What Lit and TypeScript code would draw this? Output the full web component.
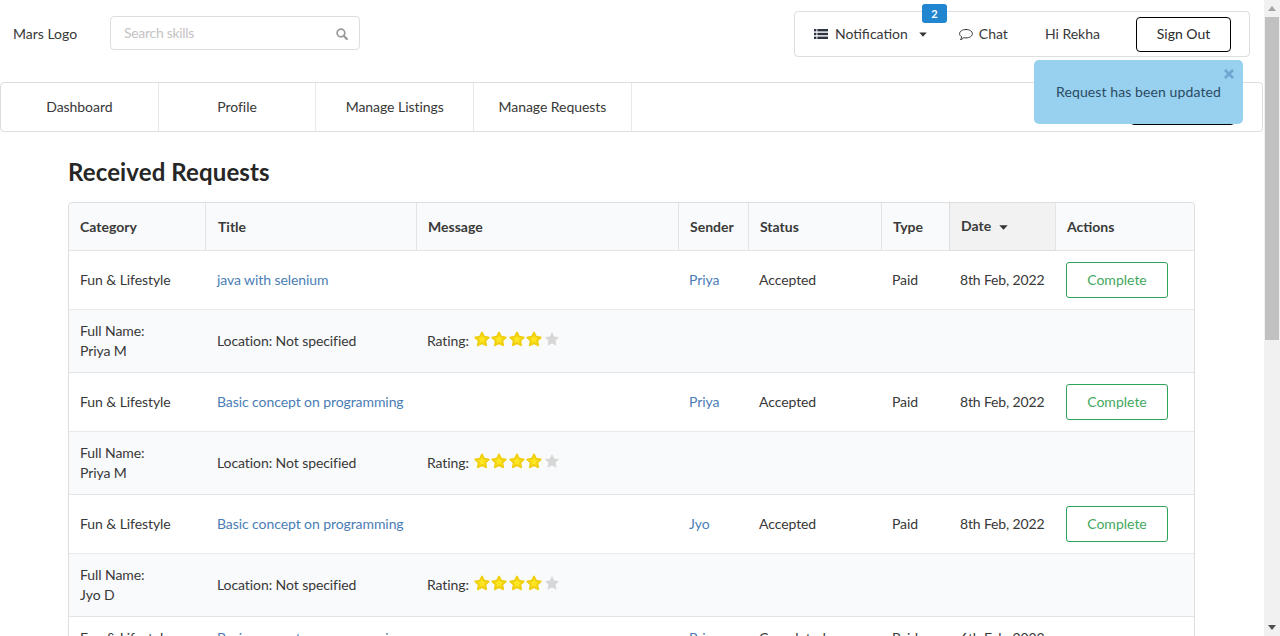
import { LitElement, html, css, nothing } from 'lit';
import { customElement } from 'lit/decorators.js';

const starPath = 'M8 1.6 L10 5.8 L14.6 6.4 L11.2 9.6 L12.1 14.2 L8 12 L3.9 14.2 L4.8 9.6 L1.4 6.4 L6 5.8 Z';

interface Request {
  title: string;
  sender: string;
  status: string;
  date: string;
  fullName: string;
  canComplete: boolean;
}

const requests: Request[] = [
  { title: 'java with selenium', sender: 'Priya', status: 'Accepted', date: '8th Feb, 2022', fullName: 'Priya M', canComplete: true },
  { title: 'Basic concept on programming', sender: 'Priya', status: 'Accepted', date: '8th Feb, 2022', fullName: 'Priya M', canComplete: true },
  { title: 'Basic concept on programming', sender: 'Jyo', status: 'Accepted', date: '8th Feb, 2022', fullName: 'Jyo D', canComplete: true },
  { title: 'Basic concept on programming', sender: 'Priya', status: 'Completed', date: '6th Feb, 2022', fullName: 'Priya M', canComplete: false },
];

const columns = [136, 211, 262, 70, 133, 68, 106, 139];

@customElement('app-root')
export class AppRoot extends LitElement {
  static styles = css`
    :host {
      display: flex;
      height: 636px;
      overflow: hidden;
      background: #fff;
      font-family: 'Lato', 'Liberation Sans', sans-serif;
      font-size: 14px;
      line-height: 20px;
      color: #383838;
    }
    .page {
      position: relative;
      width: 1264px;
      flex: none;
    }
    .top {
      display: flex;
      align-items: flex-start;
      padding: 11px 14px 25px 13px;
    }
    .logo {
      margin-top: 13px;
      width: 97px;
    }
    .search {
      display: flex;
      align-items: center;
      width: 250px;
      height: 34px;
      box-sizing: border-box;
      margin-top: 5px;
      border: 1px solid rgba(34, 36, 38, 0.15);
      border-radius: 4px;
      padding: 0 11px 0 13px;
    }
    .search input {
      flex: 1;
      min-width: 0;
      border: none;
      outline: none;
      padding: 0;
      font: inherit;
      background: transparent;
    }
    .search input::placeholder {
      color: #c4c4c4;
      letter-spacing: -0.3px;
    }
    .search svg {
      margin-top: 2px;
    }
    .user-menu {
      position: relative;
      display: flex;
      align-items: center;
      height: 46px;
      box-sizing: border-box;
      margin-left: auto;
      border: 1px solid rgba(34, 36, 38, 0.15);
      border-radius: 4px;
      padding: 0 18px 0 19px;
    }
    .user-menu svg {
      flex: none;
    }
    .notification {
      margin-left: 7px;
    }
    .caret {
      margin-left: 11px;
    }
    .chat-icon {
      margin-left: 32px;
    }
    .chat {
      margin-left: 6px;
    }
    .hello {
      margin-left: 37px;
    }
    .sign-out {
      margin-left: 36px;
      width: 95px;
      height: 35px;
      box-sizing: border-box;
      border: 1px solid #000;
      border-radius: 4px;
      background: #fff;
      padding: 0;
      font: inherit;
      font-size: 14px;
      color: #2b2b2b;
    }
    .badge {
      position: absolute;
      left: 127px;
      top: -8px;
      width: 25px;
      height: 19px;
      border-radius: 3px;
      background: #2185d0;
      color: #fff;
      font-size: 11px;
      font-weight: 700;
      line-height: 19px;
      text-align: center;
    }
    .tabs {
      display: flex;
      align-items: stretch;
      height: 50px;
      box-sizing: border-box;
      margin-right: 1px;
      border: 1px solid rgba(34, 36, 38, 0.15);
      border-radius: 4px;
    }
    .tab {
      display: flex;
      align-items: center;
      justify-content: center;
      width: 157.7px;
      box-sizing: border-box;
      border-right: 1px solid rgba(34, 36, 38, 0.1);
      letter-spacing: -0.05px;
    }
    .tab-button {
      margin: 6px 27px 6px auto;
      width: 105px;
      border: 1px solid #000;
      border-radius: 4px;
      background: #fff;
    }
    .toast {
      position: absolute;
      left: 1034px;
      top: 60px;
      width: 209px;
      height: 64px;
      border-radius: 5px;
      background: #98d0ef;
      color: #2a4a62;
      display: flex;
      align-items: center;
      justify-content: center;
      padding-bottom: 1px;
      box-sizing: border-box;
      letter-spacing: 0.1px;
    }
    .toast svg {
      position: absolute;
      right: 9px;
      top: 9px;
    }
    .content {
      padding: 0 69px 0 68px;
    }
    h1 {
      margin: 0;
      padding: 25px 0 15px;
      font-size: 24px;
      line-height: 30px;
      font-weight: 700;
      color: #262626;
      letter-spacing: 0.12px;
    }
    table {
      width: 1127px;
      table-layout: fixed;
      border-collapse: separate;
      border-spacing: 0;
      border: 1px solid rgba(34, 36, 38, 0.15);
      border-radius: 4px;
    }
    th {
      height: 48px;
      box-sizing: border-box;
      padding: 0 0 0 11px;
      text-align: left;
      font-weight: 700;
      color: #3a3a3a;
      background: #f9fafb;
      border-left: 1px solid rgba(34, 36, 38, 0.1);
      border-bottom: 1px solid rgba(34, 36, 38, 0.1);
    }
    th:first-child {
      border-left: none;
      border-top-left-radius: 4px;
    }
    th:nth-child(2) {
      padding-left: 12px;
    }
    th:last-child {
      border-top-right-radius: 4px;
    }
    th.sorted {
      background: #f2f2f2;
      padding-bottom: 2px;
    }
    th.sorted svg {
      margin-left: 4px;
      vertical-align: 1px;
    }
    td {
      padding: 11px 0 11px 11px;
      border-bottom: 1px solid rgba(34, 36, 38, 0.1);
      letter-spacing: -0.08px;
    }
    td:nth-child(2) {
      padding-left: 12px;
    }
    td.date {
      letter-spacing: -0.15px;
    }
    .details td {
      background: #f9fafb;
    }
    a {
      color: #4a7db5;
      text-decoration: none;
    }
    .complete {
      display: block;
      width: 102px;
      height: 36px;
      box-sizing: border-box;
      border: 1px solid #2fa35a;
      border-radius: 3px;
      background: #fff;
      padding: 0;
      font: inherit;
      color: #43a860;
    }
    .rating {
      display: flex;
      align-items: center;
      white-space: nowrap;
    }
    .stars {
      display: flex;
      margin: -5px 0 0 5px;
    }
    .stars svg {
      display: block;
      margin-right: 1.5px;
    }
    .scrollbar {
      width: 16px;
      flex: none;
      background: #f1f1f1;
      position: relative;
    }
    .arrow {
      display: flex;
      align-items: center;
      justify-content: center;
      height: 17px;
    }
    .thumb {
      height: 323px;
      margin: 0 1px;
      background: #c1c1c1;
    }
    .arrow.down {
      position: absolute;
      left: 0;
      right: 0;
      bottom: 0;
    }
  `;

  private star(on: boolean) {
    return html`<svg width="16" height="16" viewBox="0 0 16 16">
      <path
        d=${starPath}
        fill=${on ? '#ffe623' : '#d6d6d6'}
        stroke=${on ? '#f0cf10' : '#d6d6d6'}
        stroke-width=${on ? 2 : 0.6}
        stroke-linejoin="round"
      ></path>
    </svg>`;
  }

  private renderRequest(r: Request) {
    return html`
      <tr>
        <td>Fun &amp; Lifestyle</td>
        <td><a href="#">${r.title}</a></td>
        <td></td>
        <td><a href="#">${r.sender}</a></td>
        <td>${r.status}</td>
        <td>Paid</td>
        <td class="date">${r.date}</td>
        <td>${r.canComplete ? html`<button class="complete">Complete</button>` : nothing}</td>
      </tr>
      <tr class="details">
        <td>Full Name:<br />${r.fullName}</td>
        <td>Location: Not specified</td>
        <td>
          <div class="rating">
            Rating:
            <span class="stars">${[1, 2, 3, 4, 5].map((n) => this.star(n <= 4))}</span>
          </div>
        </td>
        <td></td>
        <td></td>
        <td></td>
        <td></td>
        <td></td>
      </tr>
    `;
  }

  render() {
    return html`
      <div class="page">
        <div class="top">
          <div class="logo">Mars Logo</div>
          <label class="search">
            <input placeholder="Search skills" />
            <svg width="12" height="12" viewBox="0 0 14 14" fill="none" stroke="#999" stroke-width="2">
              <circle cx="5.8" cy="5.8" r="4.5"></circle>
              <path d="M9 9 L12.6 12.8" stroke-width="2.6" stroke-linecap="round"></path>
            </svg>
          </label>
          <div class="user-menu">
            <svg width="14" height="12" viewBox="0 0 14 12" fill="#2b3440">
              <rect x="0" y="1" width="2.4" height="2.4"></rect>
              <rect x="3.4" y="1" width="10.6" height="2.4"></rect>
              <rect x="0" y="4.8" width="2.4" height="2.4"></rect>
              <rect x="3.4" y="4.8" width="10.6" height="2.4"></rect>
              <rect x="0" y="8.6" width="2.4" height="2.4"></rect>
              <rect x="3.4" y="8.6" width="10.6" height="2.4"></rect>
            </svg>
            <span class="notification">Notification</span>
            <svg class="caret" width="8" height="5" viewBox="0 0 8 5" fill="#333">
              <path d="M0.3 0.4 H7.7 L4 4.8 Z"></path>
            </svg>
            <span class="badge">2</span>
            <svg class="chat-icon" width="14" height="13" viewBox="0 0 14 13" fill="none" stroke="#333" stroke-width="1">
              <path d="M7 1.5 C10.4 1.5 13.4 3.2 13.4 5.7 C13.4 8.2 10.4 9.9 7 9.9 C6.2 9.9 5.4 9.8 4.8 9.7 C4 10.5 2.8 11.4 1.4 11.6 C2.1 10.8 2.6 10 2.8 9 C1.4 8.2 0.6 7 0.6 5.7 C0.6 3.2 3.6 1.5 7 1.5 Z"></path>
            </svg>
            <span class="chat">Chat</span>
            <span class="hello">Hi Rekha</span>
            <button class="sign-out">Sign Out</button>
          </div>
        </div>

        <nav class="tabs">
          <div class="tab">Dashboard</div>
          <div class="tab">Profile</div>
          <div class="tab">Manage Listings</div>
          <div class="tab">Manage Requests</div>
          <button class="tab-button"></button>
        </nav>

        <div class="toast">
          Request has been updated
          <svg width="10" height="10" viewBox="0 0 10 10" stroke="#6ea6cf" stroke-width="2.6">
            <path d="M1 1 L9 9 M9 1 L1 9"></path>
          </svg>
        </div>

        <div class="content">
          <h1>Received Requests</h1>
          <table>
            <colgroup>
              ${columns.map((w) => html`<col style="width: ${w}px" />`)}
            </colgroup>
            <thead>
              <tr>
                <th>Category</th>
                <th>Title</th>
                <th>Message</th>
                <th>Sender</th>
                <th>Status</th>
                <th>Type</th>
                <th class="sorted">
                  Date
                  <svg width="9" height="5" viewBox="0 0 9 5" fill="#333"><path d="M0.3 0.3 H8.7 L4.5 4.8 Z"></path></svg>
                </th>
                <th>Actions</th>
              </tr>
            </thead>
            <tbody>
              ${requests.map((r) => this.renderRequest(r))}
            </tbody>
          </table>
        </div>
      </div>

      <div class="scrollbar">
        <div class="arrow">
          <svg width="8" height="5" viewBox="0 0 8 5" fill="#a3a3a3"><path d="M4 0 L8 5 H0 Z"></path></svg>
        </div>
        <div class="thumb"></div>
        <div class="arrow down">
          <svg width="8" height="5" viewBox="0 0 8 5" fill="#505050"><path d="M0 0 H8 L4 5 Z"></path></svg>
        </div>
      </div>
    `;
  }
}
